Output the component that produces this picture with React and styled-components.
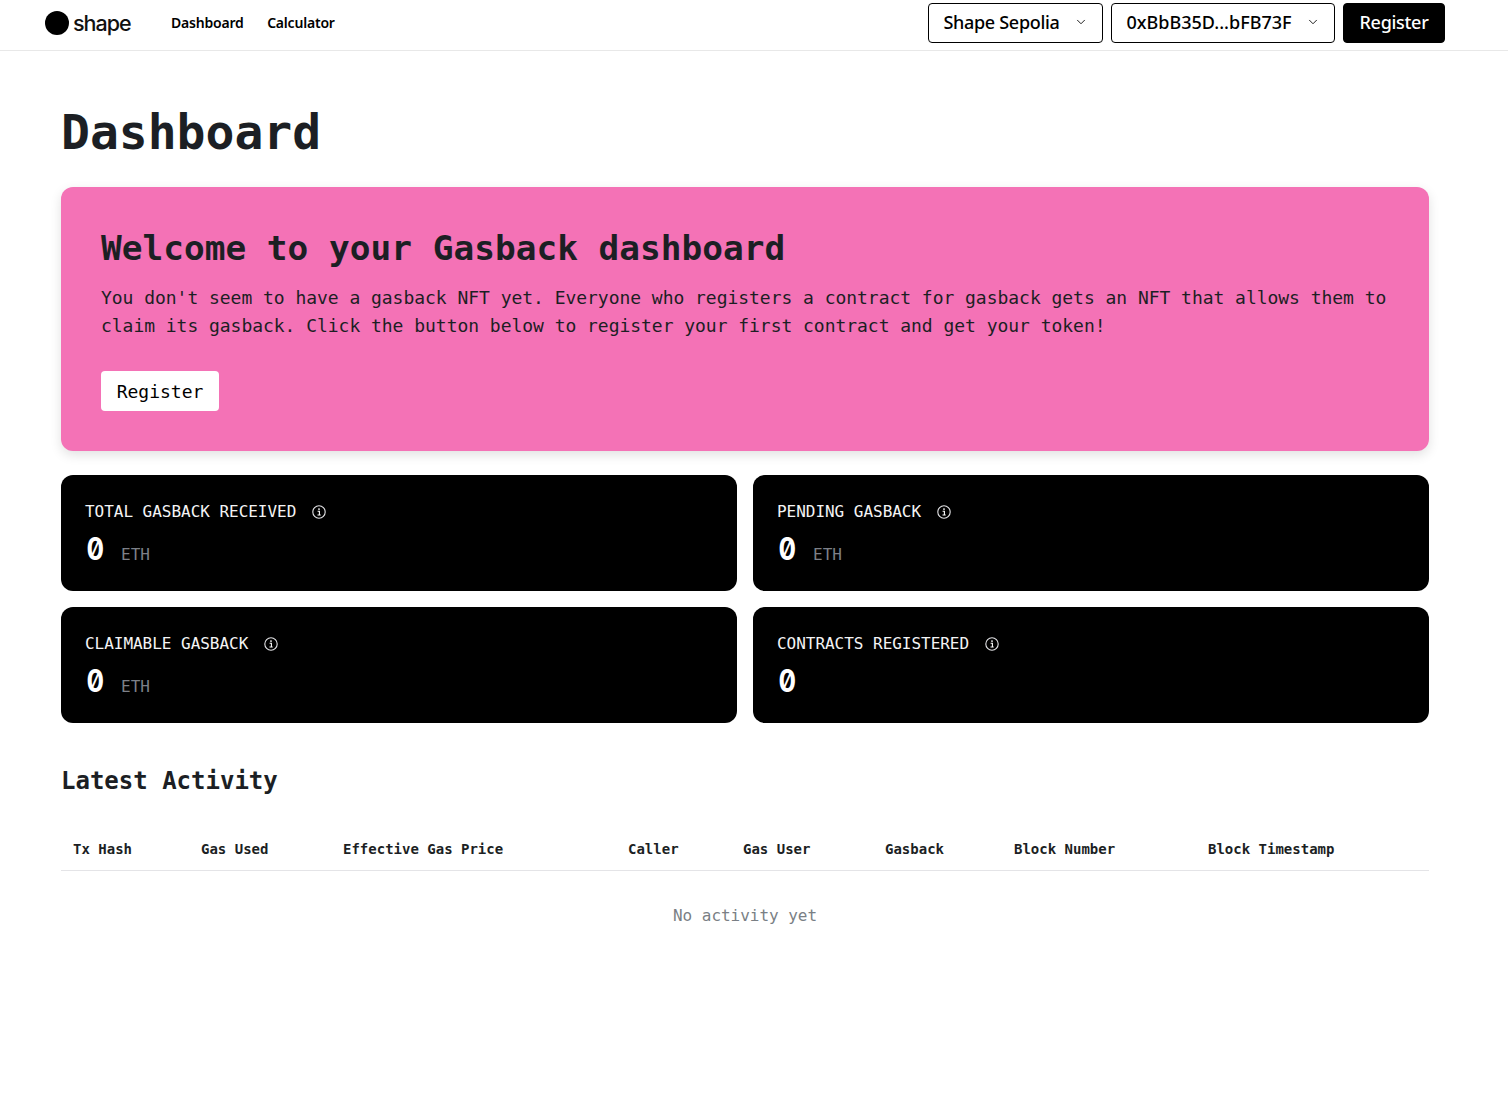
import React from "react";
import styled, { createGlobalStyle } from "styled-components";
import { ChevronDown } from "lucide-react";

const mono = `"DejaVu Sans Mono", "Liberation Mono", monospace`;
const sans = `"Noto Sans", "Open Sans", sans-serif`;

const GlobalStyle = createGlobalStyle`
  * { box-sizing: border-box; }
  body {
    margin: 0;
    background: #fff;
    color: #1c1f24;
    font-family: ${mono};
  }
`;

const Nav = styled.header`
  height: 51px;
  display: flex;
  align-items: center;
  padding: 0 63px 5px 45px;
  border-bottom: 1px solid #e8e8e8;
`;

const Logo = styled.div`
  display: flex;
  align-items: center;
  gap: 4px;
  width: 126px;
`;

const LogoText = styled.span`
  font-family: "Inter", sans-serif;
  font-size: 21.5px;
  font-weight: 500;
  letter-spacing: -1px;
  color: #111;
  line-height: 24px;
`;

const NavLink = styled.a`
  font-family: ${sans};
  font-size: 14px;
  font-weight: 600;
  color: #000;
  margin-right: 23.5px;
  letter-spacing: -0.2px;
`;

const NavRight = styled.div`
  margin-left: auto;
  display: flex;
  gap: 8px;
`;

const NavButton = styled.button`
  height: 40px;
  width: ${(p) => p.$width}px;
  display: flex;
  align-items: center;
  justify-content: center;
  gap: 14px;
  font-family: ${sans};
  font-size: 18px;
  font-weight: 500;
  letter-spacing: ${(p) => p.$spacing ?? -0.3}px;
  border-radius: 4px;
  border: 1px solid #000;
  background: ${(p) => (p.$dark ? "#000" : "#fff")};
  color: ${(p) => (p.$dark ? "#fff" : "#000")};
  padding: 0 0 2px;
`;

const Main = styled.main`
  padding: 0 79px 0 61px;
`;

const Title = styled.h1`
  margin: 0;
  padding: 53px 0 27px;
  font-size: 48px;
  line-height: 56px;
  font-weight: 700;
`;

const Banner = styled.section`
  height: 264px;
  padding: 40px;
  border-radius: 12px;
  background: #f472b6;
  box-shadow: 0 4px 12px rgba(0, 0, 0, 0.12);
`;

const BannerTitle = styled.h2`
  margin: 0 0 15px;
  font-size: 34.45px;
  line-height: 42px;
  font-weight: 700;
`;

const BannerText = styled.p`
  margin: 0;
  font-size: 18px;
  letter-spacing: -0.036px;
  line-height: 28px;
  color: #1c1f24;
`;

const BannerButton = styled.button`
  display: block;
  margin-top: 31px;
  height: 40px;
  width: 118px;
  border: 0;
  border-radius: 4px;
  background: #fff;
  color: #000;
  font-family: ${mono};
  font-size: 18px;
`;

const Cards = styled.div`
  margin-top: 24px;
  display: grid;
  grid-template-columns: 1fr 1fr;
  gap: 16px;
`;

const Card = styled.div`
  height: 116px;
  padding: 25px 24px 0;
  border-radius: 12px;
  background: #000;
  color: #fff;
`;

const CardLabel = styled.div`
  display: flex;
  align-items: center;
  gap: 16px;
  font-size: 16px;
  letter-spacing: -0.03px;
  line-height: 24px;
  color: #f4f4f5;
`;

const CardValue = styled.div`
  display: flex;
  align-items: baseline;
  gap: 18px;
  margin-top: 7px;
  line-height: 36px;
`;

/* the mono font has a dotted zero, Inter's "zero" feature gives the slashed one */
const Zero = styled.span`
  display: inline-block;
  width: 18px;
  text-align: center;
  font-family: "Inter", sans-serif;
  font-feature-settings: "zero" 1;
  font-size: 31px;
  font-weight: 700;
  transform: scaleX(0.84);
`;

const Unit = styled.span`
  font-size: 16px;
  color: #7d8088;
`;

const SectionTitle = styled.h3`
  margin: 42px 0 0;
  font-size: 24px;
  line-height: 32px;
  font-weight: 700;
`;

const Table = styled.table`
  width: 100%;
  margin-top: 31px;
  border-collapse: collapse;
  table-layout: fixed;
`;

const Th = styled.th`
  width: ${(p) => p.$width}px;
  padding: 0 12px;
  height: 42px;
  text-align: left;
  font-size: 14px;
  font-weight: 700;
  white-space: nowrap;
  border-bottom: 1px solid #e4e4e7;
`;

const EmptyCell = styled.td`
  padding: 35px 0 0;
  text-align: center;
  font-size: 16px;
  line-height: 20px;
  letter-spacing: -0.03px;
  color: #7a7f85;
`;

const InfoIcon = () => (
  <svg width="14" height="14" viewBox="0 0 14 14" fill="none">
    <circle cx="7" cy="7" r="6.2" stroke="#e4e4e7" strokeWidth="1.1" />
    <circle cx="7" cy="4.1" r="0.9" fill="#fff" />
    <path d="M5.6 6.2H7.4V9.8M5.5 10H8.7" stroke="#fff" strokeWidth="1.1" />
  </svg>
);

const columns = [
  ["Tx Hash", 128],
  ["Gas Used", 142],
  ["Effective Gas Price", 285],
  ["Caller", 115],
  ["Gas User", 142],
  ["Gasback", 129],
  ["Block Number", 194],
  ["Block Timestamp", 233],
];

const cards = [
  { label: "TOTAL GASBACK RECEIVED", unit: "ETH" },
  { label: "PENDING GASBACK", unit: "ETH" },
  { label: "CLAIMABLE GASBACK", unit: "ETH" },
  { label: "CONTRACTS REGISTERED" },
];

export default function App() {
  return (
    <>
      <GlobalStyle />
      <Nav>
        <Logo>
          <svg width="24" height="24" viewBox="0 0 24 24">
            <circle cx="12" cy="12" r="12" fill="#000" />
          </svg>
          <LogoText>shape</LogoText>
        </Logo>
        <NavLink>Dashboard</NavLink>
        <NavLink>Calculator</NavLink>
        <NavRight>
          <NavButton $width={175}>
            Shape Sepolia <ChevronDown size={14} strokeWidth={1.5} />
          </NavButton>
          <NavButton $width={224} $spacing={0}>
            0xBbB35D...bFB73F <ChevronDown size={14} strokeWidth={1.5} />
          </NavButton>
          <NavButton $width={102} $dark>
            Register
          </NavButton>
        </NavRight>
      </Nav>
      <Main>
        <Title>Dashboard</Title>
        <Banner>
          <BannerTitle>Welcome to your Gasback dashboard</BannerTitle>
          <BannerText>
            You don't seem to have a gasback NFT yet. Everyone who registers a contract for gasback gets an NFT that
            allows them to claim its gasback. Click the button below to register your first contract and get your token!
          </BannerText>
          <BannerButton>Register</BannerButton>
        </Banner>
        <Cards>
          {cards.map((c) => (
            <Card key={c.label}>
              <CardLabel>
                {c.label} <InfoIcon />
              </CardLabel>
              <CardValue>
                <Zero>0</Zero>
                {c.unit && <Unit>{c.unit}</Unit>}
              </CardValue>
            </Card>
          ))}
        </Cards>
        <SectionTitle>Latest Activity</SectionTitle>
        <Table>
          <thead>
            <tr>
              {columns.map(([name, width]) => (
                <Th key={name} $width={width}>
                  {name}
                </Th>
              ))}
            </tr>
          </thead>
          <tbody>
            <tr>
              <EmptyCell colSpan={8}>No activity yet</EmptyCell>
            </tr>
          </tbody>
        </Table>
      </Main>
    </>
  );
}
